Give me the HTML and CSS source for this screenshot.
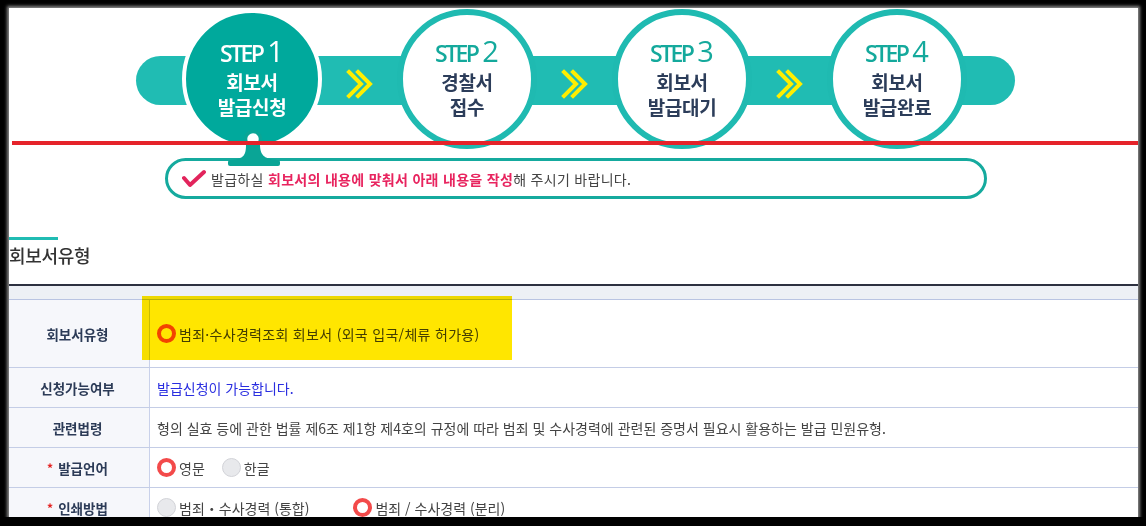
FILE: index.html
```html
<!DOCTYPE html>
<html lang="ko">
<head>
<meta charset="utf-8">
<title>회보서 발급신청</title>
<link rel="stylesheet" href="styles.css">
</head>
<body>
<div class="panel">
  <div class="steps">
    <div class="step active">
      <div class="step-no"><span class="step-word">STEP</span><span class="step-num">1</span></div>
      <div class="step-label">회보서<br>발급신청</div>
    </div>
    <div class="arrow"><svg width="30" height="32" viewBox="0 0 30 32"><polyline points="4,4 16,16 4,28" /><polyline points="13,4 25,16 13,28" /></svg></div>
    <div class="step">
      <div class="step-no"><span class="step-word">STEP</span><span class="step-num">2</span></div>
      <div class="step-label">경찰서<br>접수</div>
    </div>
    <div class="arrow"><svg width="30" height="32" viewBox="0 0 30 32"><polyline points="4,4 16,16 4,28" /><polyline points="13,4 25,16 13,28" /></svg></div>
    <div class="step">
      <div class="step-no"><span class="step-word">STEP</span><span class="step-num">3</span></div>
      <div class="step-label">회보서<br>발급대기</div>
    </div>
    <div class="arrow"><svg width="30" height="32" viewBox="0 0 30 32"><polyline points="4,4 16,16 4,28" /><polyline points="13,4 25,16 13,28" /></svg></div>
    <div class="step">
      <div class="step-no"><span class="step-word">STEP</span><span class="step-num">4</span></div>
      <div class="step-label">회보서<br>발급완료</div>
    </div>
  </div>

  <svg class="pin" width="54" height="37" viewBox="0 0 54 37">
    <path d="M19 14 L33 14 C33 24 36 29 50 30 L50 32 L4 32 L4 30 C18 29 19 24 19 14 Z" fill="#0aa596"/>
    <rect x="1" y="30" width="52" height="6" rx="2" fill="#0aa596"/>
    <circle cx="26" cy="9" r="7.5" fill="#fff" stroke="#0aa596" stroke-width="3.5"/>
  </svg>

  <div class="notice">
    <svg class="check" width="24" height="20" viewBox="0 0 24 20"><polyline points="2,9 8,16 22,3"/></svg>
    <p class="notice-text">발급하실 <strong>회보서의 내용에 맞춰서 아래 내용을 작성</strong>해 주시기 바랍니다.</p>
  </div>

  <div class="sec-bar"></div>
  <h2 class="sec-title">회보서유형</h2>

  <div class="form">
    <div class="band"></div>
    <div class="row tall">
      <div class="th">회보서유형</div>
      <div class="td"><span class="radio on"></span><span class="opt">범죄·수사경력조회 회보서 (외국 입국/체류 허가용)</span></div>
    </div>
    <div class="row">
      <div class="th">신청가능여부</div>
      <div class="td"><span class="ok">발급신청이 가능합니다.</span></div>
    </div>
    <div class="row">
      <div class="th">관련법령</div>
      <div class="td">형의 실효 등에 관한 법률 제6조 제1항 제4호의 규정에 따라 범죄 및 수사경력에 관련된 증명서 필요시 활용하는 발급 민원유형.</div>
    </div>
    <div class="row">
      <div class="th"><span class="req">*</span>발급언어</div>
      <div class="td"><span class="radio on"></span><span class="opt gap-s">영문</span><span class="radio off"></span><span class="opt">한글</span></div>
    </div>
    <div class="row">
      <div class="th"><span class="req">*</span>인쇄방법</div>
      <div class="td"><span class="radio off"></span><span class="opt gap-l">범죄・수사경력 (통합)</span><span class="radio on"></span><span class="opt">범죄 / 수사경력 (분리)</span></div>
    </div>
  </div>

  <div class="redline"></div>
  <div class="highlight"></div>
</div>
</body>
</html>
```

FILE: styles.css
```css
html, body {
  margin: 0;
  padding: 0;
}
body {
  background: #000;
  font-family: "Noto Sans CJK KR", "Noto Sans", sans-serif;
  color: #444;
}
.panel {
  margin: 8px 8px 0 9px;
  height: 509px;
  background: #fff;
  position: relative;
  overflow: hidden;
  box-shadow: 0 0 3px 2px #8a8a8a;
}

/* steps */
.steps {
  position: relative;
  height: 150px;
  box-sizing: border-box;
  padding: 1px 0 0 173px;
  display: flex;
  align-items: flex-start;
}
.steps::before {
  content: "";
  position: absolute;
  left: 127px;
  top: 48px;
  width: 879px;
  height: 49px;
  border-radius: 25px;
  background: #20bcb3;
}
.step {
  position: relative;
  z-index: 1;
  width: 140px;
  height: 140px;
  box-sizing: border-box;
  border-radius: 50%;
  border: 6px solid #1fbab1;
  background: #fff;
  display: flex;
  flex-direction: column;
  align-items: center;
  justify-content: center;
  color: #2c3d5a;
  padding-bottom: 4px;
}
.step.active {
  border: 4px solid #fff;
  background: #00a99c;
  color: #fff;
}
.step-no {
  display: flex;
  align-items: baseline;
  gap: 5px;
  height: 30px;
  line-height: 30px;
  color: #14a99c;
  margin-bottom: 3px;
}
.step.active .step-no {
  color: #fff;
}
.step-word {
  font-family: "Open Sans", sans-serif;
  font-size: 23px;
  font-weight: 600;
  letter-spacing: -2.6px;
}
.step-num {
  font-family: "Open Sans", sans-serif;
  font-size: 29px;
}
.step-label {
  font-size: 19px;
  font-weight: 700;
  line-height: 25px;
  text-align: center;
  letter-spacing: -0.3px;
}
.arrow {
  position: relative;
  z-index: 1;
  width: 75px;
  align-self: center;
  display: flex;
  justify-content: center;
}
.arrow polyline {
  fill: none;
  stroke: #ffee00;
  stroke-width: 4;
  stroke-linecap: square;
}

/* pin + notice */
.pin {
  position: absolute;
  left: 218px;
  top: 122px;
  z-index: 2;
}
.notice {
  position: relative;
  margin-left: 156px;
  width: 822px;
  height: 41px;
  box-sizing: border-box;
  border: 3px solid #15aa9e;
  border-radius: 21px;
  display: flex;
  align-items: center;
  padding-left: 14px;
  gap: 5px;
}
.check polyline {
  fill: none;
  stroke: #e2245c;
  stroke-width: 4;
  stroke-linecap: round;
  stroke-linejoin: round;
}
.notice-text {
  margin: 0;
  font-size: 14px;
  letter-spacing: 0.3px;
  color: #444;
}
.notice-text strong {
  color: #e8245f;
  font-weight: 700;
}

/* section */
.sec-bar {
  margin-top: 38px;
  width: 49px;
  height: 3px;
  background: #20bcb3;
}
.sec-title {
  margin: 0;
  padding-top: 2px;
  height: 26px;
  line-height: 26px;
  font-size: 18px;
  font-weight: 500;
  color: #333;
  letter-spacing: -0.3px;
}

/* form table */
.form {
  margin-top: 16px;
  border-top: 2px solid #2d3140;
}
.band {
  height: 13px;
  background: #edf0f5;
  border-bottom: 1px solid #b9c4e2;
}
.row {
  display: grid;
  grid-template-columns: 141px 1fr;
  height: 40px;
  box-sizing: border-box;
  border-bottom: 1px solid #c4cde6;
}
.row.tall {
  height: 68px;
}
.th {
  background: #f6f7fb;
  border-right: 1px solid #c9d1ea;
  display: flex;
  align-items: center;
  justify-content: center;
  font-size: 13.5px;
  font-weight: 700;
  color: #2c3b57;
  padding-right: 3px;
}
.req {
  color: #e3201f;
  margin-right: 5px;
  font-size: 12px;
}
.td {
  display: flex;
  align-items: center;
  padding-left: 7px;
  font-size: 14px;
  color: #444;
  white-space: nowrap;
}
.ok {
  color: #2a2ee0;
}
.radio {
  width: 19px;
  height: 19px;
  box-sizing: border-box;
  border-radius: 50%;
  flex: none;
}
.radio.on {
  border: 4.5px solid #f34a4a;
  background: #fff;
}
.radio.off {
  border: 1px solid #d2d3d8;
  background: #e8e9ec;
}
.opt {
  margin-left: 3px;
}
.row.tall .opt {
  letter-spacing: 0.3px;
}
.gap-s {
  margin-right: 17px;
}
.gap-l {
  margin-right: 44px;
}

/* annotations */
.redline {
  position: absolute;
  left: 3px;
  right: 0;
  top: 133px;
  height: 4px;
  background: #e5232a;
  z-index: 5;
}
.highlight {
  position: absolute;
  left: 133px;
  top: 288px;
  width: 370px;
  height: 64px;
  background: #ffe600;
  mix-blend-mode: multiply;
  z-index: 6;
}
```
